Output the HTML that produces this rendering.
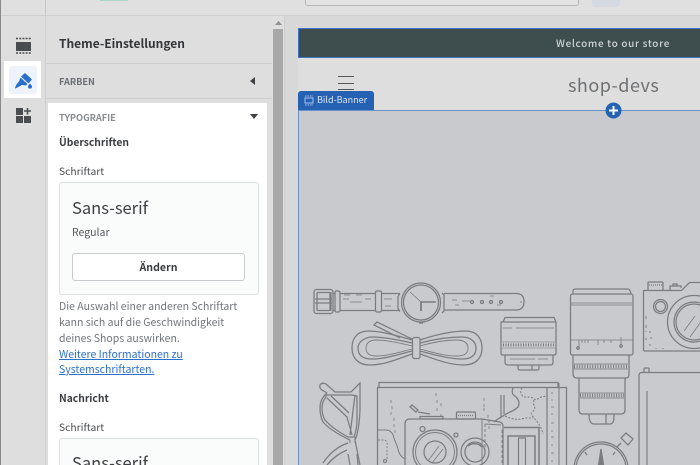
<!DOCTYPE html>
<html><head><meta charset="utf-8">
<style>
html,body{margin:0;padding:0;width:700px;height:465px;overflow:hidden}
body{background:#dedede;font-family:"Noto Sans CJK JP","Liberation Sans",sans-serif;color:#3a3c3f}
div{position:absolute;box-sizing:border-box}
.t{white-space:nowrap;line-height:16px}
#root{left:0;top:0;width:700px;height:465px;overflow:hidden;background:#dedede}
</style></head><body>
<div id="root">
<!-- top bar -->
<div style="left:0;top:0;width:700px;height:16px;background:#e0e0e0;border-bottom:1px solid #cfcfcf"></div>
<div style="left:0;top:0;width:1px;height:465px;background:#8a8a8a"></div>
<div style="left:45px;top:0;width:1px;height:16px;background:#c8c8c8"></div>
<div style="left:100px;top:0;width:28px;height:1px;background:#a9d8c6"></div>
<div style="left:305px;top:0;width:274px;height:6px;background:#e2e2e2;border:1px solid #b8b8b8;border-top:0;border-radius:0 0 3px 3px"></div>
<div style="left:592px;top:0;width:28px;height:7px;background:#d5d9e2;border-radius:0 0 3px 3px"></div>
<!-- left rail -->
<div style="left:1px;top:16px;width:45px;height:449px;background:#dedede;border-right:1px solid #cfcfcf"></div>
<svg style="position:absolute;left:0;top:0" width="46" height="130" viewBox="0 0 46 130">
<rect x="16" y="42" width="15" height="9" fill="#4a4c4f"/>
<path d="M16 38.500h15M16 53h15" stroke="#4a4c4f" stroke-width="1.400" stroke-dasharray="2 1.200"/>
<rect x="4" y="61" width="37" height="37" fill="#fff"/>
<rect x="9" y="66" width="28" height="28" rx="3" fill="#eef3fb"/>
<path d="M25 73l7 6.500-3.500 4-7.500-7z" fill="#2c6ecb"/>
<path d="M20.500 77.500l7 6.500-1.500 1.500-4-.5-6.500 3.500-.5-.5c.5-2 1.500-4 3-5.500l1-1z" fill="#2c6ecb"/>
<path d="M30 83.500c1.300 1.500 2 2.300 2 3.100a2 2 0 0 1-4 0c0-.8.700-1.600 2-3.100z" fill="#2c6ecb"/>
<path d="M16 108h7v7h-7zM16 116h7v7h-7zM24 116h7v7h-7z" fill="#4a4c4f"/>
<path d="M27.500 108v6.500M24 111h7" stroke="#4a4c4f" stroke-width="1.600"/>
</svg>
<!-- panel -->
<div style="left:46px;top:16px;width:226px;height:449px;background:#dedede"></div>
<div class="t" style="left:59px;top:36px;font-size:12px;font-weight:700;color:#333538">Theme-Einstellungen</div>
<div style="left:46px;top:63px;width:226px;height:1px;background:#cdcdcd"></div>
<div class="t" style="left:59px;top:73px;font-size:9.200px;font-weight:700;color:#6b6e72">FARBEN</div>
<svg style="position:absolute;left:249px;top:77px" width="8" height="8"><path d="M6 0v8L1 4z" fill="#3f4144"/></svg>
<div style="left:46px;top:98px;width:226px;height:1px;background:#cdcdcd"></div>
<div style="left:48px;top:103px;width:219px;height:362px;background:#fff"></div>
<div class="t" style="left:59px;top:109px;font-size:9.200px;font-weight:700;color:#8a8d90">TYPOGRAFIE</div>
<svg style="position:absolute;left:250px;top:113px" width="8" height="7"><path d="M0 1h8L4 6z" fill="#3f4144"/></svg>
<div class="t" style="left:59px;top:134px;font-size:10.300px;font-weight:700;color:#3a3c3f">Überschriften</div>
<div class="t" style="left:59px;top:163px;font-size:10.300px;color:#4a4c4f">Schriftart</div>
<div style="left:59px;top:182px;width:200px;height:113px;background:#fafbfb;border:1px solid #dcdfe2;border-radius:3px"></div>
<div class="t" style="left:72px;top:198px;font-size:16.500px;line-height:18px;color:#3f4144">Sans-serif</div>
<div class="t" style="left:72px;top:225px;font-size:10.500px;color:#55585c">Regular</div>
<div style="left:72px;top:253px;width:173px;height:28px;background:#fff;border:1px solid #c9cccf;border-radius:3px;text-align:center;font-size:10.600px;font-weight:700;line-height:27px;color:#3a3c3f">Ändern</div>
<div class="t" style="left:59px;top:299px;font-size:10.500px;color:#72757a">Die Auswahl einer anderen Schriftart</div>
<div class="t" style="left:59px;top:315px;font-size:10.500px;color:#72757a">kann sich auf die Geschwindigkeit</div>
<div class="t" style="left:59px;top:331px;font-size:10.500px;color:#72757a">deines Shops auswirken.</div>
<div class="t" style="left:59px;top:347px;font-size:10.500px;color:#2c6ecb;text-decoration:underline">Weitere Informationen zu</div>
<div class="t" style="left:59px;top:362px;font-size:10.500px;color:#2c6ecb;text-decoration:underline">Systemschriftarten.</div>
<div class="t" style="left:59px;top:390px;font-size:10.300px;font-weight:700;color:#3a3c3f">Nachricht</div>
<div class="t" style="left:59px;top:419px;font-size:10.300px;color:#4a4c4f">Schriftart</div>
<div style="left:59px;top:438px;width:200px;height:27px;background:#fafbfb;border:1px solid #dcdfe2;border-bottom:0;border-radius:3px 3px 0 0;overflow:hidden">
<div class="t" style="left:12px;top:14px;height:12px;overflow:hidden;font-size:16.500px;line-height:18px;color:#3f4144">Sans-serif</div>
</div>
<!-- scrollbar -->
<div style="left:272px;top:16px;width:13px;height:449px;background:#dfdfdf"></div>
<svg style="position:absolute;left:274px;top:20px" width="9" height="6"><path d="M1 5h7L4.500 1z" fill="#8f8f8f"/></svg>
<div style="left:273px;top:29px;width:10px;height:436px;background:#a8a8a8"></div>
<div style="left:284px;top:16px;width:1px;height:449px;background:#cfcfcf"></div>
<!-- preview -->
<div style="left:285px;top:16px;width:415px;height:449px;background:#d8d8d8"></div>
<div style="left:298px;top:28px;width:402px;height:437px;background:#dedede"></div>
<div style="left:298px;top:28px;width:402px;height:30px;background:#3e4e4e;border:1px solid #3f74c4;border-right:0"></div>
<div class="t" style="left:556px;top:35px;font-size:10px;letter-spacing:.65px;font-weight:500;color:#cfd4d4">Welcome to our store</div>
<div style="left:338px;top:76px;width:16px;height:1px;background:#55585a"></div>
<div style="left:338px;top:83px;width:16px;height:1px;background:#55585a"></div>
<div style="left:338px;top:89px;width:16px;height:1px;background:#55585a"></div>
<div class="t" style="left:568px;top:75px;font-size:18px;line-height:20px;letter-spacing:.5px;color:#6e7072">shop-devs</div>
<div style="left:298px;top:110px;width:402px;height:355px;background:#c9cace;border-top:1px solid #6d90c8;border-left:1px solid #6d90c8"></div>
<div style="left:298px;top:91px;width:76px;height:19px;background:#2562b4;border-radius:3px 3px 0 0"></div>
<svg style="position:absolute;left:304px;top:95px" width="10" height="11"><rect x="1" y="3" width="8" height="5" fill="none" stroke="#a9c3ea" stroke-width="1"/><path d="M1 1h8M1 10h8" stroke="#a9c3ea" stroke-width="1" stroke-dasharray="1.500 1"/></svg>
<div class="t" style="left:317px;top:92px;font-size:9px;color:#dfe7f4">Bild-Banner</div>
<svg style="position:absolute;left:605px;top:102px" width="17" height="17"><circle cx="8.500" cy="8.500" r="8" fill="#2562b4"/><path d="M8.500 4v9M4 8.500h9" stroke="#fff" stroke-width="2"/></svg>
<!-- illustration -->
<svg style="position:absolute;left:0;top:0" width="700" height="465" viewBox="0 0 700 465" fill="none" stroke="#7a7c80" stroke-width="1.250">
<!-- watch -->
<g>
<rect x="314" y="289.500" width="19" height="24" rx="2.500"/><rect x="317" y="292.500" width="13" height="18" rx="1"/>
<path d="M315 299h17M315 303h17M331 292v19"/>
<rect x="335" y="291" width="5" height="21" rx="1.500"/>
<path d="M333 293.500h2M340 293.500h35M340 310.500h35M333 310.500h2M381 293.500h19M381 310.500h19"/>
<rect x="375.500" y="291" width="6" height="21" rx="1.500"/>
<path d="M400 293.500l-2 3v12l2 3M442 293l2 2v16l-2 2"/>
<circle cx="421" cy="302.500" r="19.500"/><circle cx="421" cy="302.500" r="17.500"/>
<path d="M421 302v9" stroke-width="1.800"/><path d="M421 302h15" stroke-width="1.500"/><path d="M421 302L410 292" stroke-width=".8"/>
<path d="M419 323h4" stroke-width="1.300"/>
<path d="M444 293.500h73q7 .5 7 8q0 8-7 8.500h-73"/>
<path d="M344 295h6M356 295h6M350 302h12M343 299h6M365 299h6M384 299h8M385 306h6M452 300h5M462 301h8M455 305h4M490 296h4M520 302h2M497 305h4" stroke-width=".8"/>
<circle cx="472" cy="302" r="1.500" stroke-width="1.300"/><circle cx="482" cy="302" r="1.500" stroke-width="1.300"/><circle cx="491" cy="302" r="1.500" stroke-width="1.300"/><circle cx="501" cy="302" r="1.500" stroke-width="1.300"/>
</g>
<!-- bow lace -->
<g>
<path d="M412 340C395 335 380 331 368 331C356 331 352 340 352 348C352 358 358 365 370 365C385 365 400 358 412 354"/>
<path d="M412 343C395 339 383 337 372 337C368 337 358 340 358 348C358 355 362 359 372 359C386 359 400 354 412 351"/>
<path d="M412 346C396 342 384 340 376 340C370 340 366 343 366 348C366 354 370 356 376 356C388 356 400 352 412 349" stroke-width=".9"/>
<path d="M420 340C435 335 450 331 466 331C478 331 482 340 482 348C482 358 476 365 464 365C448 365 432 358 420 354"/>
<path d="M420 343C435 339 450 337 462 337C472 337 476 343 476 348C476 355 472 359 462 359C448 359 432 354 420 351"/>
<path d="M420 346C434 342 446 340 456 340C464 340 468 343 468 348C468 354 464 356 456 356C444 356 432 352 420 349" stroke-width=".9"/>
<rect x="412.500" y="337.500" width="7.500" height="21" rx="2"/>
<path d="M412 339L377 322l-3 3 26 13"/>
</g>
<!-- small lens -->
<g>
<path d="M503 322l2-4.500h49l2 4.500"/><path d="M501 322h55v31q0 2-2 2h-51q-2 0-2-2z"/>
<path d="M503 328h9M516 328h38" stroke-width=".8"/>
<path d="M502 342h53M502 348h53" stroke-width=".6"/>
<path d="M503 345h52" stroke-width="3" stroke-dasharray="1 1.500"/>
<path d="M505 355v7q0 3 3 3h43q2 0 2-3v-7"/><path d="M510 359h25M538 359h10" stroke-width=".8"/>
<path d="M518 365v3q0 2 2 2h17q2 0 2-2v-3M532 365v5"/>
</g>
<!-- big lens -->
<g>
<path d="M573 294v-3q0-2 3-2h52q2 0 3 5"/><rect x="570.500" y="294" width="62.500" height="61" rx="2"/>
<path d="M571 303h61M571 305h61" stroke-width=".8"/>
<path d="M571 340h62M579 340v8M582 340v3M585 340v3M588 340v3M598 340v5M604 340v3M611 340v3M621 337v8" stroke-width=".8"/>
<circle cx="578" cy="348" r="1.200"/><circle cx="621" cy="346" r="1.200"/>
<path d="M573 355v19q0 4 4 4h49q3 0 3-4v-19"/>
<path d="M574 364h54M574 369h54" stroke-width=".7"/><path d="M574 366.500h54" stroke-width="3.500" stroke-dasharray="1 1.600"/>
<path d="M579 378v32q0 4 4 4h38q4 0 4-4v-32"/>
<path d="M580 393h44M580 398h44" stroke-width=".7"/><path d="M580 395.500h44" stroke-width="3.500" stroke-dasharray="1 1.400"/>
<path d="M589 414c0 5 1 10 5 10h16c4 0 4-5 4-10M606 414v10"/>
</g>
<!-- right camera -->
<g>
<path d="M643.500 351V290.500h38l8-8h10.500M643.500 351H700"/>
<path d="M648 290v-7q0-1 1-1h13q1 0 1 1v7M670 290v-4h11v2M673 286v-2h4v2"/>
<path d="M649 285h13" stroke-dasharray="1 1"/>
<circle cx="660.500" cy="306.500" r="7"/><circle cx="660.500" cy="306.500" r="5"/>
<circle cx="694" cy="322" r="26.500"/><circle cx="694" cy="322" r="20"/><circle cx="694" cy="322" r="18"/>
<path d="M684 331l11-15M690 337l10-14" stroke-width=".8"/>
<path d="M646 316v3M646 325v3M646 331v1M650 331v2M646 338v2M650 344v2M651 337v2M656 348v1M663 348v1" stroke-width=".9"/>
</g>
<!-- notebook -->
<g>
<path d="M700 372.500h-58q-3 0-3 3V465"/><path d="M644 372v-3q0-1 1-1h3q1 0 1 1v3"/>
<path d="M647 391V465" stroke="#8f9195" stroke-width="1.500"/>
</g>
<!-- stopwatch -->
<g>
<circle cx="601" cy="469" r="27"/><circle cx="601" cy="469" r="25"/>
<path d="M617 447l4-4M621 438l5-5 7 6-5 6z"/>
<path d="M601 449l-2.500 16h5z" fill="#7a7c80"/>
<path d="M585 452l2 3M615 452l-2 3"/>
</g>
<!-- glasses -->
<g>
<path d="M327 393l-5-3q-3-2-2-5q2-3 6-1l9 8h16l9-9v27q-1 22-5 30l5 25"/>
<path d="M327 393q-7 6-7 15q0 8 3 14q8 9 27 18"/>
<path d="M326 397q-4 5-4 11q0 7 3 12q8 9 23 17h6q3-8 3-17v-24q-5-1-5-1h-26z"/>
<path d="M327 398l20 19 5 18M331 396l18 17M355 395l-5 40"/>
<path d="M348 443q-15 5-25 20M347 450q-12 5-20 15M348 454l2 11M357 454l1 11"/>
<path d="M350 440v3M355 437v6" stroke-width="1"/>
</g>
<!-- map -->
<g>
<path d="M379 387v-4.500h179v4.500"/>
<path d="M377.500 465V387.500h189V465"/>
<path d="M559 383v82" stroke-width="1"/>
<path d="M547 388v77"/>
<path d="M551 393h2M551 400h2M551 407h3M551 414h2M551 423h3M551 431h2M551 437h3M551 445h2M551 453h3M551 461h2" stroke-width=".8"/>
<path d="M391 400v3M392 406v3M391 412v3M394 418v3M394 424v3M395 430v3M436 393v3M437 400v3M441 403v3M437 408v3M441 414v3M484 398v3M484 404v3M488 415v3M489 420v3M484 408v3M489 426v3" stroke-width=".8"/>
<path d="M501 395v22M504 395v19" stroke-width="1.200"/>
<path d="M513 388c-2 5 0 7 3 9c4 4 3 8 2 10c-5 5-12 6-15 9c-3 2-6 3-9 6"/>
<path d="M522 388c-3 4 0 8 2 9h7l5 3 5-3 6-1M534 400c-2 6 4 8-2 12c-4 3 8 8 11 22M505 416c8 4 14 4 20 2h8" stroke-dasharray="2 1.500" stroke-width="1"/>
<path d="M378 430h8c4 0 7 3 8 8c1 4 3 6 4 11c1 5 3 8 7 10" stroke-width="1"/>
<path d="M378 440h7q3 2 2 7v14" stroke-dasharray="2 1.500" stroke-width=".9"/>
<circle cx="385" cy="461" r="1.500" stroke-width="1"/>
<path d="M410 407l2-2 6 5-2 2zM418 412l12 2"/>
<rect x="420" y="416.500" width="23" height="2.500"/>
<rect x="456.500" y="412" width="19" height="7" rx="1"/><path d="M458 415.500h16" stroke-dasharray="1 1"/>
<path d="M405 465V424q0-5 5-5h72l18 3q3 1 3 4v39"/>
<path d="M482 419v46M485 424l16 1" stroke-width=".9"/>
<path d="M485 424v26" stroke-dasharray="3 2" stroke-width=".9"/>
<path d="M502 430v35" stroke-dasharray="3 2" stroke-width=".9"/>
<circle cx="422.500" cy="429" r="2.500"/><circle cx="456" cy="435" r="2"/>
<circle cx="435" cy="452" r="22"/><circle cx="435" cy="452" r="19.500" stroke-width=".9"/>
<circle cx="435" cy="452" r="11"/>
<path d="M428 461l11-15M432 463l11-14" stroke-width=".8"/>
<circle cx="475" cy="452" r="14"/><circle cx="475" cy="452" r="10"/><path d="M468 446a10 10 0 0 1 14 1" stroke-width="1.500"/>
<path d="M504 427.500h35V465" stroke-width="1.500"/>
<path d="M508 465v-29h27v29" stroke-width="1.500"/>
<path d="M518.500 465v-27h7v27" stroke-width="1.200"/>
</g>
</svg>
</div>
</body></html>
